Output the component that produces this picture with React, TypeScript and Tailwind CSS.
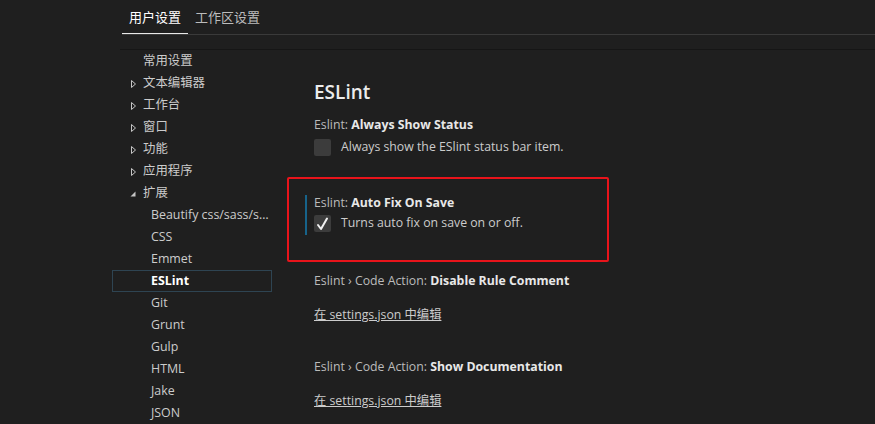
import React from "react";

const font = { fontFamily: '"Open Sans", "Noto Sans CJK SC", sans-serif' };

function Arrow({ open }: { open?: boolean }) {
  return open ? (
    <svg width="6" height="6" viewBox="0 0 6 6" className="absolute left-[17px] top-[8px]">
      <path d="M5.5 0.5 L5.5 5.5 L0.5 5.5 Z" fill="#c5c5c5" />
    </svg>
  ) : (
    <svg width="5" height="8" viewBox="0 0 5 8" className="absolute left-[18px] top-[7px]">
      <path d="M0.5 0.5 L4.5 4 L0.5 7.5 Z" fill="none" stroke="#c5c5c5" strokeWidth="1" />
    </svg>
  );
}

function TreeRow({
  label,
  arrow,
  child,
  active,
}: {
  label: string;
  arrow?: "open" | "closed";
  child?: boolean;
  active?: boolean;
}) {
  return (
    <div
      className={
        "relative h-[22px] leading-[20px] text-[12.4px] whitespace-nowrap overflow-hidden text-ellipsis border " +
        (active ? "border-[#2e4452] text-white font-bold" : "border-transparent text-[#cccccc]") +
        (child ? " pl-[38px] pr-0" : " pl-[30px]")
      }
    >
      {arrow && <Arrow open={arrow === "open"} />}
      {label}
    </div>
  );
}

function Checkbox({ checked }: { checked?: boolean }) {
  return (
    <div className="w-[17px] h-[17px] bg-[#3c3c3c] rounded-[2px] flex items-center justify-center shrink-0">
      {checked && (
        <svg width="13" height="14" viewBox="0 0 13 14">
          <path d="M2 8 L5 12 L11 1.5" fill="none" stroke="#f0f0f0" strokeWidth="2" strokeLinecap="round" strokeLinejoin="round" />
        </svg>
      )}
    </div>
  );
}

export default function App() {
  return (
    <div className="relative w-[875px] h-[424px] bg-[#1f1f1f] overflow-hidden" style={font}>
      {/* tabs */}
      <div className="flex h-[34px] pl-[122px] text-[13px]">
        <div className="px-[7px] h-[34px] leading-[34px] text-white border-b border-[#e8e8e8]">用户设置</div>
        <div className="px-[7px] h-[34px] leading-[34px] text-[#bcbcbc]">工作区设置</div>
      </div>
      <div className="ml-[122px] h-px bg-[#3a3a3a]" />
      <div className="h-[14px]" />
      <div className="ml-[120px] h-px bg-[#161616]" />
      {/* body */}
      <div className="flex">
        <div className="w-[112px]" />
        <div className="w-[160px]">
          <TreeRow label="常用设置" />
          <TreeRow label="文本编辑器" arrow="closed" />
          <TreeRow label="工作台" arrow="closed" />
          <TreeRow label="窗口" arrow="closed" />
          <TreeRow label="功能" arrow="closed" />
          <TreeRow label="应用程序" arrow="closed" />
          <TreeRow label="扩展" arrow="open" />
          <TreeRow label="Beautify css/sass/scss/less" child />
          <TreeRow label="CSS" child />
          <TreeRow label="Emmet" child />
          <TreeRow label="ESLint" child active />
          <TreeRow label="Git" child />
          <TreeRow label="Grunt" child />
          <TreeRow label="Gulp" child />
          <TreeRow label="HTML" child />
          <TreeRow label="Jake" child />
          <TreeRow label="JSON" child />
        </div>
        <div className="flex-1 pl-[33px] text-[12.3px] text-[#cccccc]">
          <div className="pl-[9px] pt-[28px] h-[56px] text-[19px] leading-[28px] font-semibold text-[#ececec]">ESLint</div>
          {/* item 1 */}
          <div className="pl-[9px]">
            <div className="mt-[10px] leading-[18px] whitespace-nowrap">
              <span className="text-[#bbbbbb]">Eslint: </span>
              <span className="font-bold text-[#e8e8e8]">Always Show Status</span>
            </div>
            <div className="mt-[5px] flex items-center gap-[10px] h-[17px]">
              <Checkbox />
              <span>Always show the ESlint status bar item.</span>
            </div>
          </div>
          {/* item 2 */}
          <div className="mt-[39px] border-l-2 border-[#17638a] pl-[7px] pb-[3px]">
            <div className="leading-[14px] pt-[1px] whitespace-nowrap">
              <span className="text-[#bbbbbb]">Eslint: </span>
              <span className="font-bold text-[#e8e8e8]">Auto Fix On Save</span>
            </div>
            <div className="mt-[5px] flex items-center gap-[10px] h-[17px]">
              <Checkbox checked />
              <span>Turns auto fix on save on or off.</span>
            </div>
          </div>
          {/* item 3 */}
          <div className="pl-[9px]">
            <div className="mt-[37px] leading-[18px] whitespace-nowrap">
              <span className="text-[#bbbbbb]">Eslint › Code Action: </span>
              <span className="font-bold text-[#e8e8e8]">Disable Rule Comment</span>
            </div>
            <div className="mt-[16px] leading-[18px] underline text-[#cccccc]">在 settings.json 中编辑</div>
          </div>
          {/* item 4 */}
          <div className="pl-[9px]">
            <div className="mt-[34px] leading-[18px] whitespace-nowrap">
              <span className="text-[#bbbbbb]">Eslint › Code Action: </span>
              <span className="font-bold text-[#e8e8e8]">Show Documentation</span>
            </div>
            <div className="mt-[16px] leading-[18px] underline text-[#cccccc]">在 settings.json 中编辑</div>
          </div>
        </div>
      </div>
      {/* annotation box */}
      <div className="absolute left-[287px] top-[177px] w-[322px] h-[85px] border-2 border-[#e8141b] rounded-[2px]" />
    </div>
  );
}
